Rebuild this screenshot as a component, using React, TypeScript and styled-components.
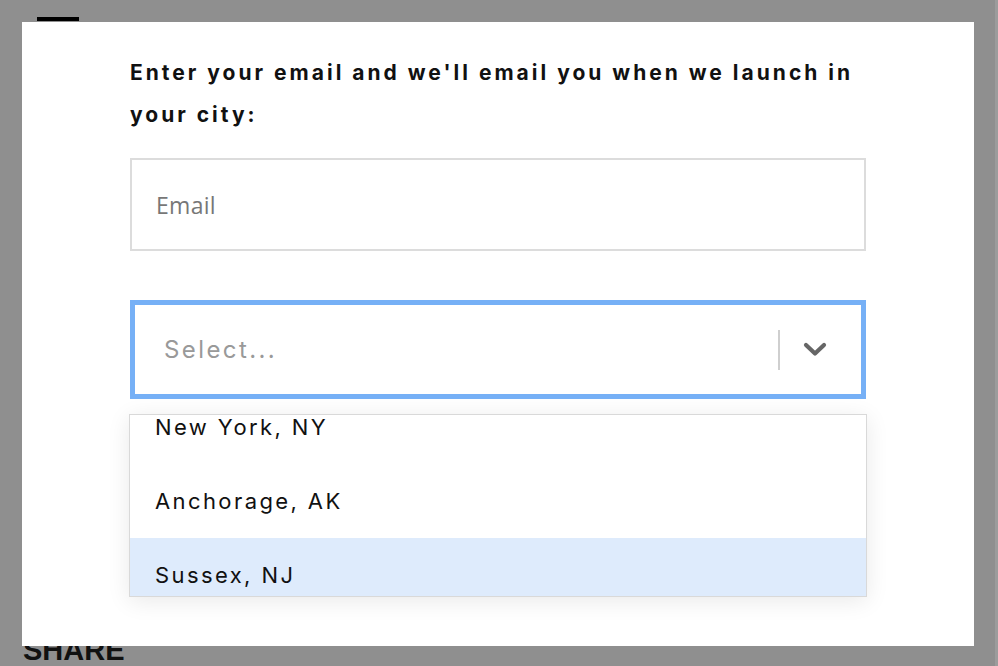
import React, { useLayoutEffect, useRef } from "react";
import styled, { createGlobalStyle } from "styled-components";

const Global = createGlobalStyle`
  html, body { margin: 0; padding: 0; }
  body { background: #8f8f8f; font-family: Inter, "Liberation Sans", sans-serif; }
  * { box-sizing: border-box; }
`;

const Page = styled.div`
  position: relative;
  width: 998px;
  height: 666px;
  overflow: hidden;
  background: #8f8f8f;
  padding: 22px 24px 20px 22px;
  display: flex;
`;

const MenuBar = styled.div`
  position: absolute;
  left: 37px;
  top: 17px;
  width: 42px;
  height: 4px;
  background: #000;
`;

const ShareLabel = styled.div`
  position: absolute;
  left: 23px;
  top: 630px;
  font-family: "Liberation Sans", Arial, sans-serif;
  font-weight: 700;
  font-size: 29px;
  line-height: 40px;
  color: #111;
`;

const ScrollEdge = styled.div`
  position: absolute;
  right: 0;
  top: 0;
  width: 3px;
  height: 666px;
  background: #9c9c9c;
`;

const Modal = styled.div`
  position: relative;
  z-index: 1;
  width: 952px;
  height: 624px;
  background: #fff;
  padding: 30px 108px 0;
  display: flex;
  flex-direction: column;
`;

const Heading = styled.p`
  margin: 0 0 22px;
  font-family: Inter, "Liberation Sans", sans-serif;
  font-weight: 700;
  font-size: 21px;
  line-height: 42px;
  letter-spacing: 3px;
  color: #111;
`;

const EmailInput = styled.input`
  width: 736px;
  height: 93px;
  border: 2px solid #dcdcdc;
  padding: 0 24px;
  font-family: "Open Sans", "Noto Sans", sans-serif;
  font-size: 23px;
  letter-spacing: 0.3px;
  color: #333;
  outline: none;
  &::placeholder { color: #777; }
`;

const SelectWrap = styled.div`
  position: relative;
  margin-top: 49px;
`;

const Control = styled.div`
  width: 736px;
  height: 99px;
  border: 5px solid #76b0f6;
  display: flex;
  align-items: center;
  padding: 0 34px 0 29px;
`;

const Placeholder = styled.span`
  flex: 1;
  font-family: Inter, "Liberation Sans", sans-serif;
  font-size: 24px;
  letter-spacing: 2.4px;
  color: #999;
`;

const Separator = styled.span`
  width: 2px;
  height: 40px;
  background: #cfcfcf;
  margin-right: 23px;
`;

const Chevron = styled.svg`
  width: 24px;
  height: 15px;
  display: block;
`;

const Menu = styled.div`
  position: absolute;
  left: -1px;
  top: 114px;
  width: 738px;
  height: 183px;
  border: 1px solid #d9d9d9;
  background: #fff;
  box-shadow: 0 4px 22px rgba(0, 0, 0, 0.09);
  overflow-y: auto;
  scrollbar-width: none;
  &::-webkit-scrollbar { display: none; }
`;

const Option = styled.div<{ $active?: boolean }>`
  height: 74px;
  display: flex;
  align-items: center;
  padding-left: 25px;
  font-family: Inter, "Liberation Sans", sans-serif;
  font-size: 22px;
  letter-spacing: 2.4px;
  color: #111;
  background: ${(p) => (p.$active ? "#deebfc" : "#fff")};
`;

const cities = [
  "Los Angeles, CA",
  "New York, NY",
  "Anchorage, AK",
  "Sussex, NJ",
  "Austin, TX",
];

export default function App() {
  const menuRef = useRef<HTMLDivElement>(null);
  useLayoutEffect(() => {
    if (menuRef.current) menuRef.current.scrollTop = 99;
  }, []);
  return (
    <>
      <Global />
      <Page>
        <MenuBar />
        <ShareLabel>SHARE</ShareLabel>
        <ScrollEdge />
        <Modal>
          <Heading>
            Enter your email and we'll email you when we launch in your city:
          </Heading>
          <EmailInput placeholder="Email" />
          <SelectWrap>
            <Control>
              <Placeholder>Select...</Placeholder>
              <Separator />
              <Chevron viewBox="0 0 24 15">
                <polyline
                  points="3,3 12,11.5 21,3"
                  fill="none"
                  stroke="#666"
                  strokeWidth="4.2"
                  strokeLinecap="round"
                  strokeLinejoin="round"
                />
              </Chevron>
            </Control>
            <Menu ref={menuRef}>
              {cities.map((c) => (
                <Option key={c} $active={c === "Sussex, NJ"}>
                  {c}
                </Option>
              ))}
            </Menu>
          </SelectWrap>
        </Modal>
      </Page>
    </>
  );
}
